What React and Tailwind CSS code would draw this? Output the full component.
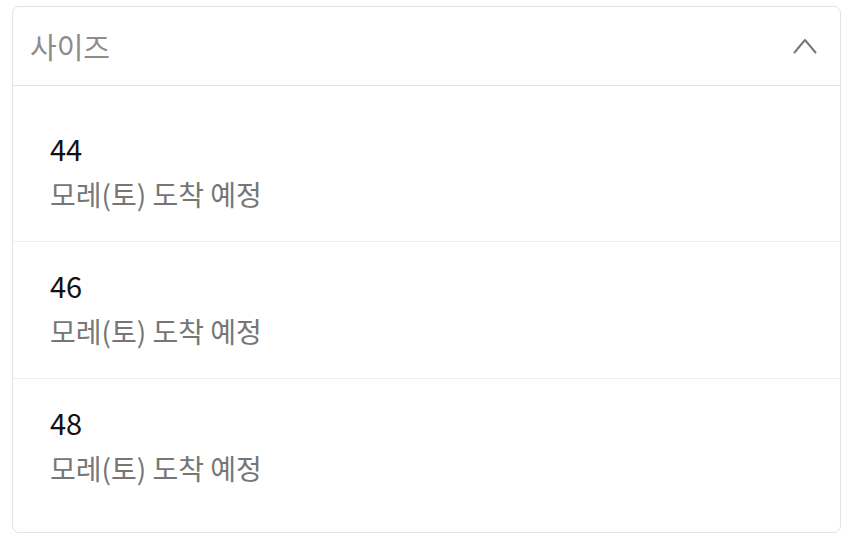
import React from 'react';

const sizes = [
  { label: '44', eta: '모레(토) 도착 예정' },
  { label: '46', eta: '모레(토) 도착 예정' },
  { label: '48', eta: '모레(토) 도착 예정' },
];

const ChevronUp = () => (
  <svg width="24" height="18" viewBox="0 0 24 18" fill="none" className="text-[#777]">
    <path d="M1.5 15.5 L12 3 L22.5 15.5" stroke="currentColor" strokeWidth="2" strokeLinecap="round" strokeLinejoin="round" />
  </svg>
);

const SizeSelect = () => {
  return (
    <div
      className="min-h-screen bg-white pt-[6px] pl-[12px] pr-[10px]"
      style={{ fontFamily: '"Noto Sans CJK KR", "Noto Sans", sans-serif' }}
    >
      <div className="w-[829px] h-[527px] rounded-[7px] border border-[#e3e3e3] bg-white flex flex-col">
        <button className="h-[79px] flex items-center justify-between pl-[17px] pr-[23px] border-b border-[#e3e3e3] text-left">
          <span className="text-[29px] leading-none text-[#8c8c8c]">사이즈</span>
          <ChevronUp />
        </button>
        <ul className="pt-[19px] pb-[15px]">
          {sizes.map((s, i) => (
            <li
              key={s.label}
              className={`pl-[37px] pt-[23px] pb-[27px] ${i < sizes.length - 1 ? 'border-b border-[#efefef]' : ''}`}
            >
              <div className="text-[29px] leading-[40px] text-[#111]">{s.label}</div>
              <div className="mt-[6px] text-[28px] leading-[40px] text-[#767676]">{s.eta}</div>
            </li>
          ))}
        </ul>
      </div>
    </div>
  );
};

export default SizeSelect;
